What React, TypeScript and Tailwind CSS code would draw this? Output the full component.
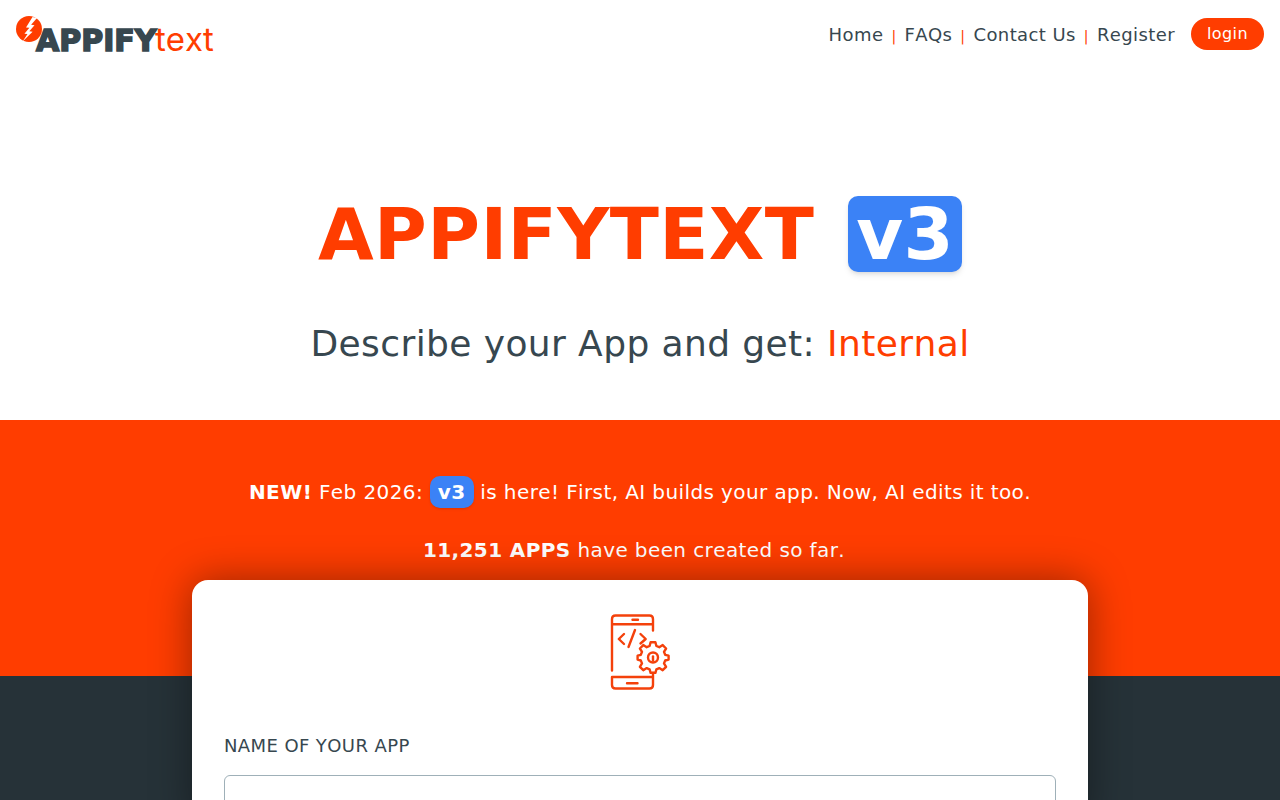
import React from "react";

const links = ["Home", "FAQs", "Contact Us", "Register"];

function Logo() {
  return (
    <svg viewBox="0 0 204 46" className="h-[46px] w-[204px] tracking-normal" role="img" aria-label="APPIFYtext">
      <circle cx="13" cy="13" r="13" fill="#ff3d00" />
      <path d="M16.500 1 10 11.500l3.400 .3-5 6 3.100 .3L6.600 25.500l10-9.800-3.300-.5 5.200-6-3.400-.5L21 2z" fill="#fff" />
      <text x="20" y="35" fontFamily="DejaVu Sans, sans-serif" fontSize="30" fontWeight="700" fill="#37474f" stroke="#37474f" strokeWidth="1.600">
        APPIFY
      </text>
      <text x="139" y="35" fontFamily="Inter, sans-serif" fontSize="33" fontWeight="400" fill="#ff3d00">
        text
      </text>
    </svg>
  );
}

function PhoneIcon() {
  return (
    <svg viewBox="0 0 60 78" className="h-[78px] w-[60px]" fill="none" stroke="#f4410b" strokeWidth="2.400" strokeLinecap="round" strokeLinejoin="round" aria-hidden="true">
      <path d="M2 57.500V6q0-3.500 3.500-3.500h34q3.500 0 3.500 3.500v11.500M2 11.200h41M22.500 6.800h5.500" />
      <path d="M2 64h41v8q0 3.500-3.500 3.500h-34Q2 75.500 2 72zM43 64v-4M17 70.200h10.500" />
      <path d="M14 21 8.800 26l5.200 5M25 17 18.500 34M30.500 21l5.200 5-5.200 4.500" />
      <path d="M40.600 29.200h4.800l1 3.800 2.900 1.200 3.400-2.100 3.400 3.400-2.100 3.400 1.200 2.900 3.400 .9v3.800l-3.400 1-1.200 2.900 2.100 3.400-3.400 3.400-3.400-2.100-2.900 1.200-1 3.500h-4.800l-1-3.500-2.900-1.200-3.400 2.100-3.400-3.400 2.100-3.400-1.200-2.900-3.200-1v-3.800l3.200-.9 1.200-2.900-2.100-3.400 3.400-3.400 3.400 2.100 2.900-1.200z" />
      <circle cx="43" cy="44.500" r="5" />
      <path d="M43 43.500V47.500" />
    </svg>
  );
}

export default function App() {
  return (
    <div className="flex min-h-screen flex-col bg-white font-['DejaVu_Sans',sans-serif] tracking-wide text-[#37474f] [font-kerning:none]">
      <header className="flex h-16 items-start justify-between px-4 pt-4">
        <a href="#home">
          <Logo />
        </a>
        <nav className="flex items-start pt-0.5">
          <div className="flex items-baseline pt-[3px]">
            {links.map((link, i) => (
              <React.Fragment key={link}>
                {i > 0 && <span className="px-2 text-sm text-[#ff3d00]">|</span>}
                <a href={`#${link}`} className="text-lg">{link}</a>
              </React.Fragment>
            ))}
          </div>
          <button className="ml-4 h-8 rounded-full bg-[#ff3d00] px-4 text-base text-white tracking-wide">login</button>
        </nav>
      </header>

      <section className="flex flex-col items-center pt-[132px] pb-[52px] text-center">
        <h1 className="flex items-center gap-[34px] text-7xl leading-[76px] font-bold text-[#ff3d00]">
          APPIFYTEXT
          <span className="rounded-[10px] bg-[#3b82f6] px-2 text-white shadow-md">v3</span>
        </h1>
        <p className="mt-12 text-4xl leading-[48px]">
          Describe your App and get: <span className="text-[#ff3d00]">Internal</span>
        </p>
      </section>

      <main className="flex grow flex-col bg-[linear-gradient(#ff3d00_256px,#263238_256px)]">
        <div className="flex flex-col items-center pt-14 text-center text-xl text-white">
          <p className="leading-8">
            <strong>NEW!</strong> Feb 2026:{" "}
            <span className="inline-block rounded-[10px] bg-[#3b82f6] px-2 font-bold shadow-sm">v3</span> is here! First, AI builds your app. Now, AI edits it too.
          </p>
          <p className="mt-7 pr-3 leading-7">
            <strong>11,251 APPS</strong> have been created so far.
          </p>
        </div>
        <form className="mx-auto mt-4 w-[70%] grow rounded-t-2xl bg-white px-8 pt-[33px] shadow-[0_0_40px_rgba(0,0,0,0.4)]">
          <div className="flex justify-center">
            <PhoneIcon />
          </div>
          <label htmlFor="app-name" className="mt-[41px] block text-lg">NAME OF YOUR APP</label>
          <input id="app-name" type="text" className="mt-[15px] block h-12 w-full rounded-md border border-[#9fb0b8] px-3" />
        </form>
      </main>
    </div>
  );
}
